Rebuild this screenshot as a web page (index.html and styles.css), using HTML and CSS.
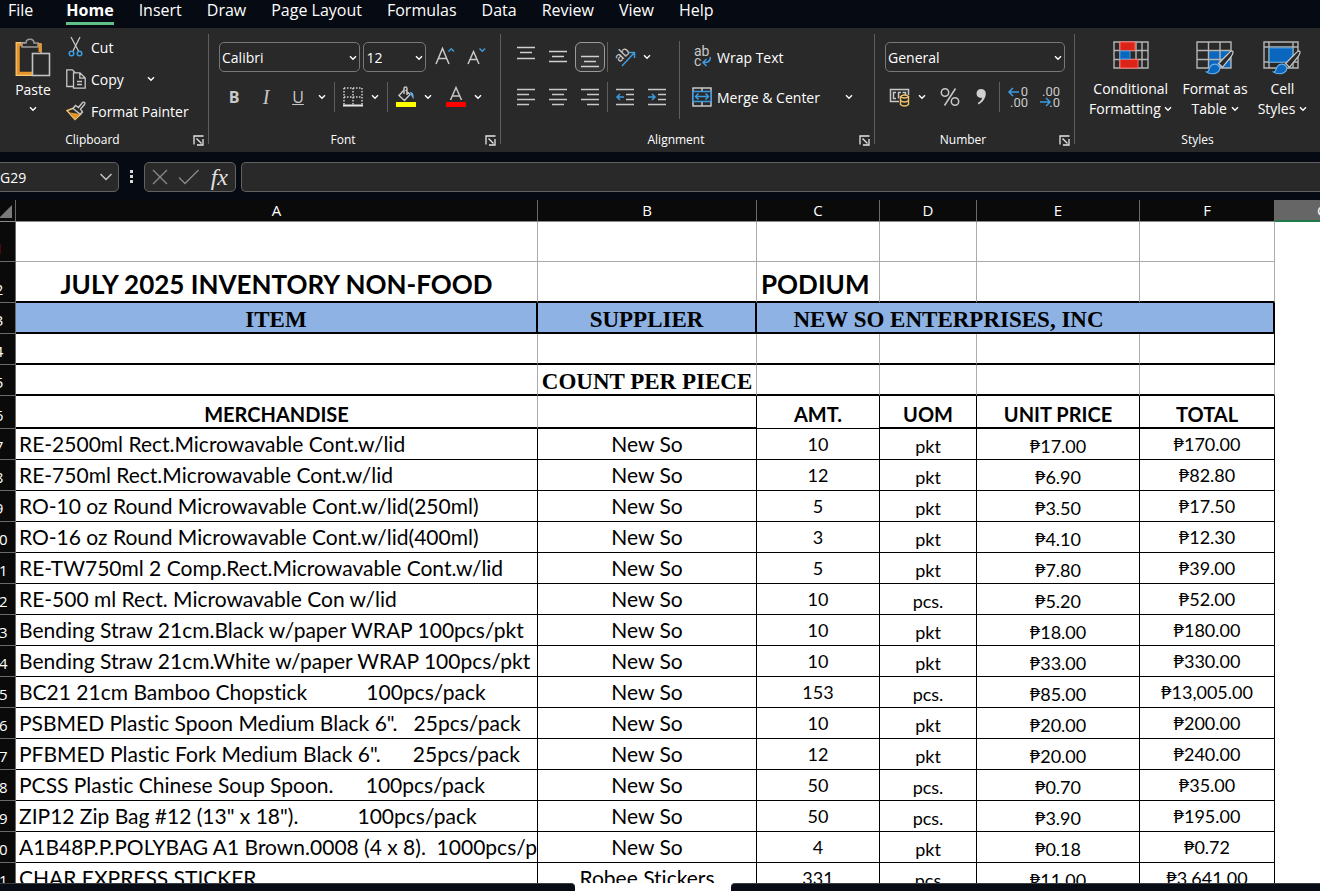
FILE: index.html
```html
<!DOCTYPE html>
<html lang="en">
<head>
<meta charset="UTF-8">
<meta name="viewport" content="width=device-width, initial-scale=1.0">
<title>July 2025 Inventory Non-Food</title>
<link rel="stylesheet" href="styles.css">
</head>
<body>
<!-- Shared icons -->
<svg class="defs" aria-hidden="true">
  <symbol id="caret" viewBox="0 0 8 6"><path d="M1 1.2l3 3 3-3" fill="none" stroke="#fff" stroke-width="1.4"/></symbol>
  <symbol id="launcher" viewBox="0 0 11 11"><path d="M1 9.5V1h9.5M3.5 3.5l5 5M10 4v6H4" fill="none" stroke="#e6e6e6" stroke-width="1.3"/></symbol>
  <symbol id="brush" viewBox="0 0 30 26"><path d="M27.500 1c2 .5 1 3-1 6l-9 11-4-4 9-9c2-2 3.500-4 5-4z" fill="#292929" stroke="#c8c8c8" stroke-width="1.300"/><path d="M1 23c3 0 2-3 4-6 2.500-3 7-3 9 0 2 4-1 7-5 7.500-3 .4-6 0-8-1.500z" fill="#0b66bd" stroke="#62b0ee" stroke-width="1.200"/></symbol>
</svg>

<nav class="menu">
  <button>File</button>
  <button class="active">Home</button>
  <button>Insert</button>
  <button>Draw</button>
  <button>Page Layout</button>
  <button>Formulas</button>
  <button>Data</button>
  <button>Review</button>
  <button>View</button>
  <button>Help</button>
</nav>

<div class="ribbon">
  <!-- Clipboard -->
  <section class="group clipboard">
    <div class="tools">
      <button class="paste">
        <svg width="36" height="40" viewBox="0 0 36 40"><path d="M10 6.500H3v29h15" fill="none" stroke="#e8952a" stroke-width="3.500"/><path d="M10 4.700H1.200v32.600H18M23 6.500h3V15" fill="none" stroke="#f6c774" stroke-width="1.300"/><path d="M22 6.500h3V14" fill="none" stroke="#e8952a" stroke-width="3"/><path d="M7 9V5h4c0-5 8-5 8 0h4v4z" fill="#292929" stroke="#9a9a9a" stroke-width="1.600"/><rect x="17.500" y="15.500" width="17" height="22" fill="#292929" stroke="#c2c2c2" stroke-width="1.600"/></svg>
        <span>Paste</span>
        <svg class="caret"><use href="#caret"/></svg>
      </button>
      <div class="stack">
        <button>
          <svg width="20" height="20" viewBox="0 0 20 20"><path d="M5 0l7.500 14M14 0L7 14" stroke="#c8c8c8" stroke-width="1.300"/><circle cx="5.500" cy="16.500" r="2.300" fill="none" stroke="#3d9be0" stroke-width="1.500"/><circle cx="13.500" cy="16.500" r="2.300" fill="none" stroke="#3d9be0" stroke-width="1.500"/></svg>
          Cut
        </button>
        <button>
          <svg width="20" height="20" viewBox="0 0 20 20"><path d="M7 17.500H.8V.8h5.500l3 3M7.500 3.800h6.500l5.200 5.200v10.200H7.500zM13.800 4v5.200h5.200M11 12.500h5M11 15.500h5" fill="none" stroke="#c8c8c8" stroke-width="1.300"/></svg>
          Copy
          <svg class="caret"><use href="#caret"/></svg>
        </button>
        <button>
          <svg width="20" height="20" viewBox="0 0 20 20"><path d="M8 7L1 9.500l8 9 6-5.500z" fill="#292929" stroke="#f6c774" stroke-width="1.400"/><path d="M4 11.500l10 1.500-5 5z" fill="#e8952a"/><path d="M7 7.500l2.500-3 3 2L16.500 1.500c2-1 3 .5 2 2l-4 4.500 2 3-2.500 2z" fill="#292929" stroke="#c8c8c8" stroke-width="1.400"/></svg>
          Format Painter
        </button>
      </div>
    </div>
    <footer>Clipboard<button class="launch" aria-label="Clipboard settings"><svg><use href="#launcher"/></svg></button></footer>
  </section>

  <!-- Font -->
  <section class="group font">
    <div class="tools rows">
      <div class="row">
        <label class="select family"><select aria-label="Font"><option>Calibri</option></select><svg class="caret"><use href="#caret"/></svg></label>
        <label class="select size"><select aria-label="Font size"><option>12</option></select><svg class="caret"><use href="#caret"/></svg></label>
        <button class="icon" aria-label="Increase font size"><svg width="22" height="22" viewBox="0 0 22 22"><path d="M2 18L8.500 2.500 15 18M4.300 12.500h8.400" fill="none" stroke="#c8c8c8" stroke-width="1.500"/><path d="M14.500 5.500l2.800-2.800L20 5.500" fill="none" stroke="#3d9be0" stroke-width="1.400"/></svg></button>
        <button class="icon" aria-label="Decrease font size"><svg width="22" height="22" viewBox="0 0 22 22"><path d="M3 18L8.500 5.500 14 18M5 13.500h7" fill="none" stroke="#c8c8c8" stroke-width="1.500"/><path d="M14.500 2.500l2.800 2.800L20 2.500" fill="none" stroke="#3d9be0" stroke-width="1.400"/></svg></button>
      </div>
      <div class="row">
        <button class="icon letter"><b>B</b></button>
        <button class="icon letter"><i>I</i></button>
        <button class="icon letter"><u>U</u></button>
        <button class="drop" aria-label="Underline styles"><svg class="caret"><use href="#caret"/></svg></button>
        <span class="sep"></span>
        <button class="icon narrow" aria-label="Borders"><svg width="20" height="20" viewBox="0 0 20 20"><path d="M1 1h18M1 10h18M1 1v17M10 1v17M19 1v17" stroke="#d0d0d0" stroke-width="1.500" stroke-dasharray="1.500 1.500"/><path d="M0 18.500h20" stroke="#e6e6e6" stroke-width="2"/></svg></button>
        <button class="drop" aria-label="Border styles"><svg class="caret"><use href="#caret"/></svg></button>
        <span class="sep"></span>
        <button class="icon narrow" aria-label="Fill color"><svg width="20" height="22" viewBox="0 0 20 22"><path d="M8 4L3 9.500l5.500 5L14 8.500 9.500 4M8 8V2.500c0-2 3-2 3 0V9" fill="none" stroke="#c8c8c8" stroke-width="1.400"/><path d="M14 6c3 0 4 2 3.500 7.500L15 9z" fill="#62b0ee"/><path d="M0 16h20v5H0z" fill="#ffff00"/></svg></button>
        <button class="drop" aria-label="Fill colors"><svg class="caret"><use href="#caret"/></svg></button>
        <button class="icon narrow font-color" aria-label="Font color"><svg width="20" height="22" viewBox="0 0 20 22"><path d="M4.500 14L10 1.500 15.500 14M6.500 10h7" fill="none" stroke="#c8c8c8" stroke-width="1.500"/><path d="M0 16h20v5H0z" fill="#f00"/></svg></button>
        <button class="drop" aria-label="Font colors"><svg class="caret"><use href="#caret"/></svg></button>
      </div>
    </div>
    <footer>Font<button class="launch" aria-label="Font settings"><svg><use href="#launcher"/></svg></button></footer>
  </section>

  <!-- Alignment -->
  <section class="group alignment">
    <div class="tools">
      <div class="rows">
        <div class="row">
          <button class="icon" aria-label="Top align"><svg width="30" height="30"><path d="M6 5.500h18M9 10.500h12M6 16.500h18" stroke="#d0d0d0" stroke-width="1.500"/></svg></button>
          <button class="icon" aria-label="Middle align"><svg width="30" height="30"><path d="M6 9.500h18M9 14.500h12M6 19.500h18" stroke="#d0d0d0" stroke-width="1.500"/></svg></button>
          <button class="icon pressed" aria-label="Bottom align"><svg width="28" height="28"><path d="M5 13.500h18M8 18.500h12M5 23.500h18" stroke="#d0d0d0" stroke-width="1.500"/></svg></button>
          <span class="sep"></span>
          <button class="icon" aria-label="Orientation"><svg width="22" height="22" viewBox="0 0 22 22"><text class="glyph" x="1" y="14" font-size="14" transform="rotate(-45 7 10)">ab</text><path d="M8 20L20 7M15 6.500h5.500v5.500" fill="none" stroke="#3d9be0" stroke-width="1.500"/></svg></button>
          <button class="drop slim" aria-label="Orientation options"><svg class="caret"><use href="#caret"/></svg></button>
        </div>
        <div class="row">
          <button class="icon" aria-label="Align left"><svg width="18" height="18"><path d="M0 1.500h18M0 6.500h12M0 11.500h18M0 16.500h12" stroke="#c8c8c8" stroke-width="1.500"/></svg></button>
          <button class="icon" aria-label="Center"><svg width="18" height="18"><path d="M0 1.500h18M3 6.500h12M0 11.500h18M3 16.500h12" stroke="#c8c8c8" stroke-width="1.500"/></svg></button>
          <button class="icon" aria-label="Align right"><svg width="18" height="18"><path d="M0 1.500h18M6 6.500h12M0 11.500h18M6 16.500h12" stroke="#c8c8c8" stroke-width="1.500"/></svg></button>
          <span class="sep"></span>
          <button class="icon" aria-label="Decrease indent"><svg width="18" height="18"><path d="M0 1.500h18M10 6.500h8M10 11.500h8M0 16.500h18" stroke="#c8c8c8" stroke-width="1.500"/><path d="M8 9H1M4 6L1 9l3 3" fill="none" stroke="#3d9be0" stroke-width="1.500"/></svg></button>
          <button class="icon" aria-label="Increase indent"><svg width="18" height="18"><path d="M0 1.500h18M10 6.500h8M10 11.500h8M0 16.500h18" stroke="#c8c8c8" stroke-width="1.500"/><path d="M0 9h7M4 6l3 3-3 3" fill="none" stroke="#3d9be0" stroke-width="1.500"/></svg></button>
        </div>
      </div>
      <span class="sep tall"></span>
      <div class="rows wide">
        <button class="labeled">
          <svg width="20" height="22" viewBox="0 0 20 22"><text class="glyph" x="2" y="10" font-size="14">ab</text><text class="glyph" x="2" y="20" font-size="14">c</text><path d="M18 11c1 4-2 6-7 5.500M14.500 13L11 16.500l3.500 3.500" fill="none" stroke="#3d9be0" stroke-width="1.500"/></svg>
          Wrap Text
        </button>
        <button class="labeled">
          <svg width="20" height="20" viewBox="0 0 20 20"><path d="M1 1h18v18H1zM10 1v18" fill="none" stroke="#c8c8c8" stroke-width="1.500"/><path d="M1 4.500h18v10H1z" fill="#292929" stroke="#3d9be0" stroke-width="1.500"/><path d="M4 9.500h12M6.500 6.500l-3 3 3 3M13.500 6.500l3 3-3 3" fill="none" stroke="#3d9be0" stroke-width="1.500"/></svg>
          Merge &amp; Center
          <svg class="caret"><use href="#caret"/></svg>
        </button>
      </div>
    </div>
    <footer>Alignment<button class="launch" aria-label="Alignment settings"><svg><use href="#launcher"/></svg></button></footer>
  </section>

  <!-- Number -->
  <section class="group number">
    <div class="tools rows">
      <div class="row">
        <label class="select format"><select aria-label="Number format"><option>General</option></select><svg class="caret"><use href="#caret"/></svg></label>
      </div>
      <div class="row">
        <button class="icon" aria-label="Accounting format"><svg width="22" height="20" viewBox="0 0 22 20"><path d="M10 14.500H1.500v-12h18V8M7 5.500H4.500v6H7M12 5.500H9.500v6M16.500 8V5.500h-3" fill="none" stroke="#c8c8c8" stroke-width="1.500"/><path d="M11.500 9.500v8c2 2 6 2 8 0v-8" fill="#292929" stroke="#f2c46b" stroke-width="1.400"/><path d="M11.500 9.500c2-2 6-2 8 0-2 2-6 2-8 0zM11.500 13.500c2 2 6 2 8 0" fill="none" stroke="#f2c46b" stroke-width="1.400"/></svg></button>
        <button class="drop slim" aria-label="Currencies"><svg class="caret"><use href="#caret"/></svg></button>
        <button class="icon" aria-label="Percent style"><svg width="20" height="20" viewBox="0 0 20 20"><circle cx="5" cy="5.500" r="3.700" fill="none" stroke="#c8c8c8" stroke-width="1.500"/><circle cx="15" cy="14.500" r="3.700" fill="none" stroke="#c8c8c8" stroke-width="1.500"/><path d="M15.500 1.500l-11 17" stroke="#c8c8c8" stroke-width="1.500"/></svg></button>
        <button class="icon" aria-label="Comma style"><svg width="20" height="20" viewBox="0 0 20 20"><path d="M10 2c4 0 5.500 3 4.500 7-1 4-4 7-7 8.500l-.7-1.500c2.500-1.500 4-3 4.400-5.200C8 11.500 5.500 9.500 5.500 6.500 5.500 4 7.500 2 10 2z" fill="#d0d0d0"/></svg></button>
        <span class="sep"></span>
        <button class="icon" aria-label="Increase decimal"><svg width="22" height="24" viewBox="0 0 22 24"><text class="glyph" x="21" y="11" font-size="13" text-anchor="end">0</text><text class="glyph" x="21" y="22" font-size="13" text-anchor="end">.00</text><path d="M12 7H2M6 3L2 7l4 4" fill="none" stroke="#3d9be0" stroke-width="1.500"/></svg></button>
        <button class="icon" aria-label="Decrease decimal"><svg width="22" height="24" viewBox="0 0 22 24"><text class="glyph" x="21" y="11" font-size="13" text-anchor="end">.00</text><text class="glyph" x="21" y="22" font-size="13" text-anchor="end">.0</text><path d="M1 17h10M7 13l4 4-4 4" fill="none" stroke="#3d9be0" stroke-width="1.500"/></svg></button>
      </div>
    </div>
    <footer>Number<button class="launch" aria-label="Number settings"><svg><use href="#launcher"/></svg></button></footer>
  </section>

  <!-- Styles -->
  <section class="group styles">
    <div class="tools">
      <button class="big">
        <svg width="36" height="34" viewBox="0 0 36 34"><path d="M1 1h34v26H1zM1 9.500h34M1 18.500h34M7 1v26M23 1v26M29 1v26" fill="none" stroke="#b4b4b4" stroke-width="1.400"/><path d="M7 1h15v8.500H7zM7 18.500h18V27H7z" fill="#dc2318" stroke="#ff6b62"/><path d="M7 10h10v8H7z" fill="#0b66bd" stroke="#3d9be0"/></svg>
        <span>Conditional<br>Formatting <svg class="caret"><use href="#caret"/></svg></span>
      </button>
      <button class="big">
        <svg width="38" height="34" viewBox="0 0 38 34"><path d="M13 10h22v17H13z" fill="#0b66bd"/><path d="M1 1h34v26H1zM1 9.500h34M1 18.500h34M12.500 1v26M24 1v26" fill="none" stroke="#b4b4b4" stroke-width="1.400"/><use href="#brush" x="9" y="9" width="30" height="25"/></svg>
        <span>Format as<br>Table <svg class="caret"><use href="#caret"/></svg></span>
      </button>
      <button class="big">
        <svg width="38" height="34" viewBox="0 0 38 34"><path d="M1 1h34v26H1zM1 6h34M1 21h34M6 1v26M30 1v26" fill="none" stroke="#b4b4b4" stroke-width="1.400"/><path d="M6.500 7h23v14h-23z" fill="#0b66bd" stroke="#3d9be0"/><use href="#brush" x="9" y="9" width="30" height="25"/></svg>
        <span>Cell<br>Styles <svg class="caret"><use href="#caret"/></svg></span>
      </button>
    </div>
    <footer>Styles</footer>
  </section>
</div>

<div class="formula-bar">
  <div class="name-box">
    <input type="text" value="G29" aria-label="Name box">
    <svg width="14" height="8" viewBox="0 0 14 8"><path d="M1.500 1l5.500 5.500L12.500 1" fill="none" stroke="#c8c8c8" stroke-width="1.400"/></svg>
  </div>
  <svg class="dots" width="3" height="14"><path d="M0 0h3v3H0zM0 5h3v3H0zM0 10h3v3H0z" fill="#d8d8d8"/></svg>
  <div class="fx-box">
    <button aria-label="Cancel"><svg width="16" height="16" viewBox="0 0 16 16"><path d="M1 1l14 14M15 1L1 15" stroke="#8a8a8a" stroke-width="1.300"/></svg></button>
    <button aria-label="Enter"><svg width="22" height="16" viewBox="0 0 22 16"><path d="M1 8.500l6 6L20.500 1" fill="none" stroke="#8a8a8a" stroke-width="1.300"/></svg></button>
    <button class="fx">fx</button>
  </div>
  <input class="formula" type="text" aria-label="Formula">
</div>

<main class="sheet">
  <table>
    <colgroup>
      <col class="num"><col class="a"><col class="b"><col class="c"><col class="d"><col class="e"><col class="f"><col>
    </colgroup>
    <thead>
      <tr>
        <th class="corner"><svg width="12" height="13"><path d="M12 0v13H-1z" fill="#7a7a7a"/></svg></th>
        <th>A</th><th>B</th><th>C</th><th>D</th><th>E</th><th>F</th><th class="current">G</th>
      </tr>
    </thead>
    <tbody>
      <tr class="r1 blank"><th class="red"><span>1</span></th><td></td><td></td><td></td><td></td><td></td><td></td><td></td></tr>
      <tr class="r2 title"><th><span>2</span></th><td>JULY 2025 INVENTORY NON-FOOD</td><td></td><td class="branch">PODIUM</td><td></td><td></td><td></td><td></td></tr>
      <tr class="band"><th><span>3</span></th><td>ITEM</td><td>SUPPLIER</td><td colspan="3" class="open">NEW SO ENTERPRISES, INC</td><td></td><td></td></tr>
      <tr class="thick r4"><th><span>4</span></th><td></td><td></td><td></td><td></td><td></td><td></td><td></td></tr>
      <tr class="thick count"><th><span>5</span></th><td></td><td>COUNT PER PIECE</td><td></td><td></td><td></td><td></td><td></td></tr>
      <tr class="thick heads"><th><span>6</span></th><td>MERCHANDISE</td><td></td><td>AMT.</td><td>UOM</td><td>UNIT PRICE</td><td>TOTAL</td><td></td></tr>
      <tr class="item"><th><span>7</span></th><td>RE-2500ml Rect.Microwavable Cont.w/lid</td><td>New So</td><td>10</td><td>pkt</td><td>₱17.00</td><td>₱170.00</td><td></td></tr>
      <tr class="item"><th><span>8</span></th><td>RE-750ml Rect.Microwavable Cont.w/lid</td><td>New So</td><td>12</td><td>pkt</td><td>₱6.90</td><td>₱82.80</td><td></td></tr>
      <tr class="item"><th><span>9</span></th><td>RO-10 oz Round Microwavable Cont.w/lid(250ml)</td><td>New So</td><td>5</td><td>pkt</td><td>₱3.50</td><td>₱17.50</td><td></td></tr>
      <tr class="item"><th><span>10</span></th><td>RO-16 oz Round Microwavable Cont.w/lid(400ml)</td><td>New So</td><td>3</td><td>pkt</td><td>₱4.10</td><td>₱12.30</td><td></td></tr>
      <tr class="item"><th><span>11</span></th><td>RE-TW750ml 2 Comp.Rect.Microwavable Cont.w/lid</td><td>New So</td><td>5</td><td>pkt</td><td>₱7.80</td><td>₱39.00</td><td></td></tr>
      <tr class="item"><th><span>12</span></th><td>RE-500 ml Rect. Microwavable Con w/lid</td><td>New So</td><td>10</td><td>pcs.</td><td>₱5.20</td><td>₱52.00</td><td></td></tr>
      <tr class="item"><th><span>13</span></th><td>Bending Straw 21cm.Black w/paper WRAP 100pcs/pkt</td><td>New So</td><td>10</td><td>pkt</td><td>₱18.00</td><td>₱180.00</td><td></td></tr>
      <tr class="item"><th><span>14</span></th><td>Bending Straw 21cm.White w/paper WRAP 100pcs/pkt</td><td>New So</td><td>10</td><td>pkt</td><td>₱33.00</td><td>₱330.00</td><td></td></tr>
      <tr class="item"><th><span>15</span></th><td>BC21 21cm Bamboo Chopstick           100pcs/pack</td><td>New So</td><td>153</td><td>pcs.</td><td>₱85.00</td><td>₱13,005.00</td><td></td></tr>
      <tr class="item"><th><span>16</span></th><td>PSBMED Plastic Spoon Medium Black 6".   25pcs/pack</td><td>New So</td><td>10</td><td>pkt</td><td>₱20.00</td><td>₱200.00</td><td></td></tr>
      <tr class="item"><th><span>17</span></th><td>PFBMED Plastic Fork Medium Black 6".      25pcs/pack</td><td>New So</td><td>12</td><td>pkt</td><td>₱20.00</td><td>₱240.00</td><td></td></tr>
      <tr class="item"><th><span>18</span></th><td>PCSS Plastic Chinese Soup Spoon.      100pcs/pack</td><td>New So</td><td>50</td><td>pcs.</td><td>₱0.70</td><td>₱35.00</td><td></td></tr>
      <tr class="item"><th><span>19</span></th><td>ZIP12 Zip Bag #12 (13" x 18").           100pcs/pack</td><td>New So</td><td>50</td><td>pcs.</td><td>₱3.90</td><td>₱195.00</td><td></td></tr>
      <tr class="item"><th><span>20</span></th><td>A1B48P.P.POLYBAG A1 Brown.0008 (4 x 8).  1000pcs/pkt</td><td>New So</td><td>4</td><td>pkt</td><td>₱0.18</td><td>₱0.72</td><td></td></tr>
      <tr class="item"><th><span>21</span></th><td>CHAR EXPRESS STICKER</td><td>Robee Stickers</td><td>331</td><td>pcs</td><td>₱11.00</td><td>₱3,641.00</td><td></td></tr>
    </tbody>
  </table>
</main>

<div class="tab-strip"><span></span><span></span></div>
</body>
</html>
```
FILE: styles.css
```css
:root {
  --shell: #060a12;
  --ribbon: #292929;
  --line: #5e5e5e;
  --grid: #ababab;
  --band: #8db2e3;
  --ui-font: "Open Sans", "Noto Sans", sans-serif;
  --cell-font: Lato, sans-serif;
}

* {
  box-sizing: border-box;
}

body {
  margin: 0;
  height: 100vh;
  display: flex;
  flex-direction: column;
  overflow: hidden;
  background: var(--shell);
  color: #fff;
  font-family: var(--ui-font);
  font-size: 14px;
}

button,
input,
select {
  font: inherit;
  color: inherit;
  background: none;
  border: none;
  padding: 0;
  margin: 0;
}

svg {
  flex: none;
  overflow: visible;
}

.defs {
  position: absolute;
  width: 0;
  height: 0;
}

.caret {
  width: 8px;
  height: 6px;
}

.glyph {
  fill: #c8c8c8;
  font-family: Roboto, sans-serif;
}

/* Menu */
.menu {
  flex: none;
  display: flex;
  gap: 25px;
  height: 28px;
  padding-left: 8px;
}

.menu button {
  height: 25px;
  padding-bottom: 2px;
  border-bottom: 3px solid transparent;
  font-size: 16px;
  line-height: 20px;
}

.menu .active {
  margin-left: 8px;
  border-color: #5fc088;
  font-weight: 700;
}

/* Ribbon */
.ribbon {
  flex: none;
  display: flex;
  height: 124px;
  background: var(--ribbon);
}

.group {
  position: relative;
  flex: none;
  display: flex;
  flex-direction: column;
  justify-content: space-between;
  padding: 10px 9px 3px;
}

.group:not(:last-child)::after {
  content: "";
  position: absolute;
  right: 0;
  top: 6px;
  bottom: 8px;
  width: 1px;
  background: var(--line);
}

.clipboard { width: 209px; }
.font { width: 292px; }
.alignment { width: 374px; }
.number { width: 200px; }
.styles { flex: 1; }

.group footer {
  font-size: 12px;
  line-height: 18px;
  text-align: center;
  padding-right: 24px;
}

.styles footer {
  padding-right: 0;
}

.launch {
  position: absolute;
  right: 5px;
  bottom: 6px;
  width: 11px;
  height: 11px;
}

.launch svg {
  display: block;
  width: 11px;
  height: 11px;
}

.tools {
  display: flex;
}

.rows {
  display: flex;
  flex-direction: column;
  gap: 10px;
  padding-top: 4px;
}

.row {
  display: flex;
  align-items: center;
  height: 30px;
}

.paste {
  display: flex;
  flex-direction: column;
  align-items: center;
  width: 48px;
  height: 84px;
  line-height: 24px;
}

.paste .caret {
  margin-top: 4px;
}

.stack {
  display: flex;
  flex-direction: column;
  margin: -7px 0 -5px;
  padding-left: 9px;
}

.stack button {
  display: flex;
  align-items: center;
  gap: 5px;
  height: 32px;
}

.stack .caret {
  margin-left: 18px;
}

.select {
  position: relative;
  height: 30px;
}

.select select {
  width: 100%;
  height: 30px;
  padding-left: 2px;
  appearance: none;
  border: 1px solid #777;
  border-radius: 5px;
}

.select .caret {
  position: absolute;
  right: 3px;
  top: 13px;
}

.family { width: 143px; margin-left: 1px; }
.size { width: 63px; margin: 0 3px; }
.format { width: 180px; margin-left: 1px; }

.icon {
  width: 32px;
  height: 30px;
  display: flex;
  align-items: center;
  justify-content: center;
}

.narrow {
  width: 28px;
}

.font-color {
  margin-left: 6px;
}

.pressed {
  width: 30px;
  margin: 0 1px;
  border: 1px solid #9a9a9a;
  border-radius: 6px;
  background: #333;
}

.letter {
  color: #c8c8c8;
  font-size: 16px;
}

.letter i {
  font-family: "Liberation Serif", serif;
  font-size: 20px;
}

.drop {
  width: 16px;
  height: 30px;
}

.drop .caret {
  display: block;
  margin: 0 auto;
}

.slim {
  width: 12px;
  margin-right: 6px;
}

.sep {
  width: 1px;
  height: 30px;
  margin: 0 2px;
  background: var(--line);
}

.font .sep {
  margin: 0 4px;
}

.tall {
  height: 78px;
  margin: 3px 12px 0 0;
}

.alignment .rows:first-child {
  width: 169px;
}

.alignment .sep:not(.tall) {
  margin: 0 1px;
}

.labeled {
  display: flex;
  align-items: center;
  gap: 5px;
  height: 30px;
}

.labeled .caret {
  margin-left: 20px;
}

.big {
  display: flex;
  flex-direction: column;
  align-items: center;
  padding-top: 3px;
  line-height: 20px;
}

.big span {
  margin-top: 4px;
}

.big .caret {
  vertical-align: 2px;
}

.styles .tools {
  gap: 10px;
  padding-left: 5px;
}

/* Formula bar */
.formula-bar {
  flex: none;
  display: flex;
  align-items: center;
  height: 48px;
  padding-top: 2px;
}

.name-box,
.fx-box,
.formula {
  height: 30px;
  background: var(--ribbon);
  border: 1px solid #626262;
  border-radius: 5px;
}

.name-box {
  display: flex;
  align-items: center;
  width: 124px;
  margin-left: -5px;
  padding: 0 5px 0 4px;
}

.name-box input {
  flex: 1;
  min-width: 0;
}

.dots {
  margin: 0 11px;
}

.fx-box {
  display: flex;
  align-items: center;
  justify-content: space-between;
  width: 92px;
  padding: 0 7px;
}

.fx-box svg {
  display: block;
}

.fx {
  font: italic 24px/24px "Liberation Serif", serif;
  color: #e0e0e0;
}

.formula {
  flex: 1;
  margin-left: 5px;
  border-right: none;
  border-radius: 5px 0 0 5px;
}

/* Sheet */
.sheet {
  flex: 1;
  min-height: 0;
  overflow: hidden;
  background: #fff;
}

table {
  width: 100%;
  table-layout: fixed;
  border-collapse: separate;
  border-spacing: 0;
}

.num { width: 16px; }
.a { width: 522px; }
.b { width: 219px; }
.c { width: 123px; }
.d { width: 97px; }
.e { width: 163px; }
.f { width: 135px; }

th {
  padding: 0;
  background: #0a0a0a;
  border-right: 1px solid #6a6a6a;
  border-bottom: 1px solid #8a8a8a;
  font-size: 15px;
  font-weight: 400;
  line-height: 18px;
  overflow: hidden;
}

thead th {
  height: 22px;
  padding-bottom: 1px;
}

.corner svg {
  display: block;
  margin-top: 2px;
}

thead .current {
  padding-left: 42px;
  border-right: none;
  border-bottom: 2px solid #1f7a4a;
  background: #666;
  text-align: left;
}

/* Row numbers are scrolled half out of view */
tbody th {
  vertical-align: bottom;
  border-color: #6a6a6a;
}

tbody th span {
  display: block;
  width: 34px;
  margin-left: -18px;
  padding-bottom: 4px;
}

.red {
  color: #b01010;
}

td {
  height: 31px;
  padding: 0;
  border-right: 1px solid var(--grid);
  border-bottom: 1px solid var(--grid);
  color: #000;
  font-family: var(--cell-font);
  font-size: 20px;
  font-variant-ligatures: none;
  line-height: 24px;
  text-align: center;
  vertical-align: bottom;
  white-space: pre;
  overflow: hidden;
}

td:last-child,
tbody tr td:last-child {
  border: none;
}

.r1 td { height: 40px; }

.r2 td {
  height: 41px;
  padding-bottom: 1px;
  border-bottom: 2px solid #000;
  font-size: 26px;
  font-weight: 700;
  line-height: 32px;
}

.r2 .branch {
  padding-left: 4px;
  text-align: left;
}

.band td,
.count td {
  font: bold 23px/24px "Liberation Serif", serif;
  vertical-align: bottom;
}

.band td:not(:last-child) {
  background: var(--band);
  border-right: 2px solid #000;
  border-bottom: 2px solid #000;
}

.band .open:not(:last-child) {
  border-right: none;
}

.thick td {
  border-bottom: 2px solid #000;
}

.r4 td:nth-child(7) {
  border-right-color: #000;
}

.heads td {
  height: 33px;
  padding-bottom: 1px;
  font-weight: 700;
}

.heads td:nth-child(n+3) {
  border-right-color: #000;
}

.heads td:nth-child(4) {
  padding-bottom: 2px;
  border-bottom-width: 1px;
}

.item td {
  border-color: #000;
  padding-bottom: 1px;
  font-size: 18px;
}

.item td:nth-child(2),
.item td:nth-child(3) {
  padding-bottom: 3px;
  font-size: 21px;
}

.item td:nth-child(2) {
  padding-left: 3px;
  text-align: left;
}

.item td:nth-child(4),
.item td:nth-child(7) {
  padding-bottom: 3px;
}

/* Bottom edge with the open sheet tab between */
.tab-strip {
  flex: none;
  display: flex;
  gap: 156px;
  height: 8px;
  background: #fff;
}

.tab-strip span {
  width: 575px;
  background: #080c14;
  border-top: 1px solid #3a3d44;
  border-radius: 0 4px 0 0;
}

.tab-strip span:last-child {
  flex: 1;
  border-radius: 4px 0 0 0;
}
```
